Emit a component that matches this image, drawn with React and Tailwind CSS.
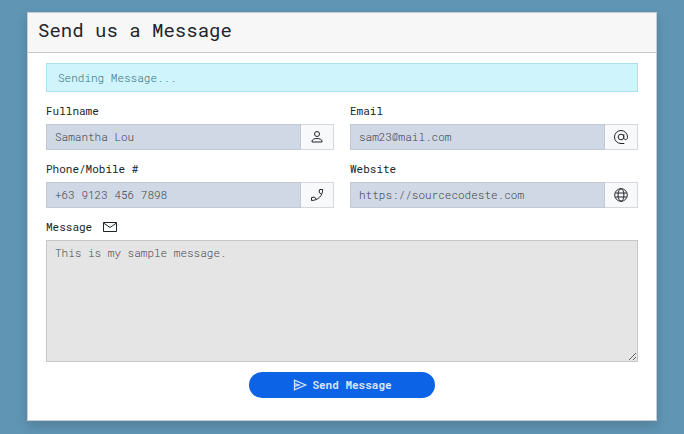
import React, { useState } from "react";

const iconProps = {
  viewBox: "0 0 16 16",
  fill: "none",
  stroke: "currentColor",
  "aria-hidden": true,
};

function PersonIcon() {
  return (
    <svg {...iconProps} className="size-4">
      <circle cx="8" cy="5" r="2.5" />
      <path d="M3 13v-.9c0-1.6 2.400-2.600 5-2.600s5 1 5 2.600v.9z" />
    </svg>
  );
}

function AtIcon() {
  return (
    <svg {...iconProps} className="size-4">
      <circle cx="8" cy="8" r="2.8" />
      <path d="M10.800 5.200v3.500c0 1 .7 1.900 1.800 1.900s1.900-.9 1.900-1.900V8A6.500 6.500 0 1 0 8 14.500h3.300" />
    </svg>
  );
}

function PhoneIcon() {
  return (
    <svg {...iconProps} className="size-4">
      <path d="M10.600 2.500h3.100c0 6.300-4.900 11-11.200 11v-2.900l3-.6 1.700 2.100M10.600 2.500l-.5 2.900 2.200 1.700" />
    </svg>
  );
}

function GlobeIcon() {
  return (
    <svg {...iconProps} className="size-4">
      <circle cx="8" cy="8" r="6.3" />
      <ellipse cx="8" cy="8" rx="2.9" ry="6.3" />
      <path d="M2.300 6h11.400M2.300 10h11.400" />
    </svg>
  );
}

function MailIcon() {
  return (
    <svg {...iconProps} className="size-4">
      <path d="M1.500 3.500h13v9h-13zM1.500 4L8 8.500 14.500 4" />
    </svg>
  );
}

function SendIcon() {
  return (
    <svg {...iconProps} strokeWidth="1.3" className="size-4">
      <path d="M2.500 3.200v9.600L13.700 8zM2.500 6.700L7 8l-4.500 1.300" />
    </svg>
  );
}

function Field({ id, label, type, value, onChange, icon }) {
  return (
    <div>
      <label htmlFor={id} className="block leading-4">{label}</label>
      <div className="mt-[5px] flex h-[26px]">
        <input
          id={id}
          name={id}
          type={type}
          value={value}
          onChange={onChange}
          className="min-w-0 flex-1 border border-[#c3c9d4] bg-[#d0d7e5] px-2 font-light text-[#40454d] outline-none"
        />
        <span className="flex w-[33px] items-center justify-center border border-l-0 border-[#d5d9de] bg-[#f8f9fa]">
          {icon}
        </span>
      </div>
    </div>
  );
}

function App() {
  const [form, setForm] = useState({
    fullname: "Samantha Lou",
    email: "sam23@mail.com",
    phone: "+63 9123 456 7898",
    website: "https://sourcecodeste.com",
    message: "This is my sample message.",
  });
  const [sending, setSending] = useState(true);

  const handleChange = (e) => {
    setForm({ ...form, [e.target.name]: e.target.value });
  };

  const handleSubmit = (e) => {
    e.preventDefault();
    setSending(true);
  };

  return (
    <div className="min-h-screen bg-[#6095b4] px-[27px] py-3 font-['Roboto_Mono','DejaVu_Sans_Mono',monospace] text-[11px] text-[#212529]">
      <div className="border border-[#c5cdd3] bg-white shadow-[0_5px_11px_rgba(0,0,0,0.15)]">
        <div className="border-b border-[#c4c8cc] bg-[#f7f7f7] px-[10px] pt-[3px] pb-2">
          <h1 className="text-[19px] leading-7">Send us a Message</h1>
        </div>

        <form onSubmit={handleSubmit} className="px-[18px] pt-[10px] pb-[22px]">
          {sending && (
            <div role="status" className="border border-[#a9e2ee] bg-[#cff4fc] px-[11px] py-[5px] font-light leading-[17px] text-[#34727d]">
              Sending Message...
            </div>
          )}

          <div className="mt-[11px] grid grid-cols-2 gap-x-4 gap-y-[11px]">
            <Field id="fullname" label="Fullname" type="text" value={form.fullname} onChange={handleChange} icon={<PersonIcon />} />
            <Field id="email" label="Email" type="email" value={form.email} onChange={handleChange} icon={<AtIcon />} />
            <Field id="phone" label="Phone/Mobile #" type="tel" value={form.phone} onChange={handleChange} icon={<PhoneIcon />} />
            <Field id="website" label="Website" type="url" value={form.website} onChange={handleChange} icon={<GlobeIcon />} />
          </div>

          <label htmlFor="message" className="mt-[11px] flex items-center gap-[10px] leading-4">
            Message <MailIcon />
          </label>
          <textarea
            id="message"
            name="message"
            rows={7}
            value={form.message}
            onChange={handleChange}
            className="mt-[5px] block w-full resize-y border border-[#c5c8ca] bg-[#e5e5e5] px-2 py-1 font-light leading-4 text-[#484b4e] outline-none"
          />

          <button
            type="submit"
            className="mx-auto mt-[10px] flex h-[26px] w-[186px] items-center justify-center gap-1 rounded-full bg-[#0d63e5] font-bold text-[#d7e4fb]"
          >
            <SendIcon />
            Send Message
          </button>
        </form>
      </div>
    </div>
  );
}

export default App;
